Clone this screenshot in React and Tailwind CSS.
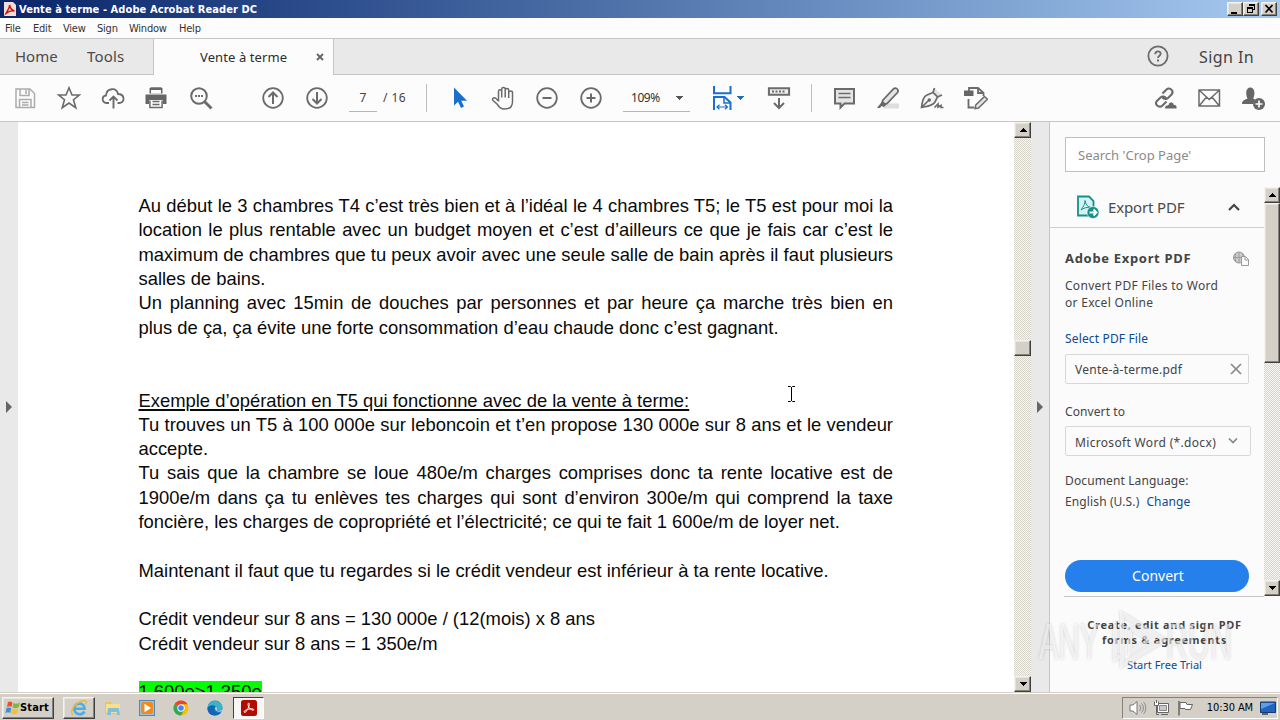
import clsx from 'clsx'

const bevel = 'bg-[#d4d0c8] border border-t-[#f4f2ee] border-l-[#f4f2ee] border-r-[#404040] border-b-[#404040] shadow-[inset_-1px_-1px_0_#85827c,inset_1px_1px_0_#e6e3dd]'
const track = 'bg-[repeating-conic-gradient(#f6f5f1_0_25%,#d8d5cb_0_50%)] bg-[length:2px_2px]'

const lines = [
  { text: 'Au début le 3 chambres T4 c’est très bien et à l’idéal le 4 chambres T5; le T5 est pour moi la', fill: true },
  { text: 'location le plus rentable avec un budget moyen et c’est d’ailleurs ce que je fais car c’est le', fill: true },
  { text: 'maximum de chambres que tu peux avoir avec une seule salle de bain après il faut plusieurs', fill: true },
  { text: 'salles de bains.' },
  { text: 'Un planning avec 15min de douches par personnes et par heure ça marche très bien en', fill: true },
  { text: 'plus de ça, ça évite une forte consommation d’eau chaude donc c’est gagnant.' },
  { text: '' },
  { text: '' },
  { text: 'Exemple d’opération en T5 qui fonctionne avec de la vente à terme:', underline: true },
  { text: 'Tu trouves un T5 à 100 000e sur leboncoin et t’en propose 130 000e sur 8 ans et le vendeur', fill: true },
  { text: 'accepte.' },
  { text: 'Tu sais que la chambre se loue 480e/m charges comprises donc ta rente locative est de', fill: true },
  { text: '1900e/m dans ça tu enlèves tes charges qui sont d’environ 300e/m qui comprend la taxe', fill: true },
  { text: 'foncière, les charges de copropriété et l’électricité; ce qui te fait 1 600e/m de loyer net.' },
  { text: '' },
  { text: 'Maintenant il faut que tu regardes si le crédit vendeur est inférieur à ta rente locative.' },
  { text: '' },
  { text: 'Crédit vendeur sur 8 ans = 130 000e / (12(mois) x 8 ans' },
  { text: 'Crédit vendeur sur 8 ans = 1 350e/m' },
  { text: '' },
  { text: '1 600e>1 350e', mark: true },
]

function Icon({ children, className, size = 24 }) {
  return (
    <svg viewBox="0 0 24 24" width={size} height={size} fill="none" stroke="#6b6b6b" strokeWidth="1.8" className={clsx('shrink-0', className)}>
      {children}
    </svg>
  )
}

function Caret({ className, up }) {
  return (
    <svg viewBox="0 0 8 4" width="8" height="4" className={clsx('shrink-0', className)} shapeRendering="crispEdges">
      <path d={up ? 'M0 4L4 0L8 4z' : 'M0 0H8L4 4z'} fill="currentColor" />
    </svg>
  )
}

function ScrollButton({ up }) {
  return <div className={clsx('h-4 w-full flex items-center justify-center text-black', bevel)}><Caret up={up} /></div>
}

function AcrobatIcon({ size }) {
  return (
    <svg viewBox="0 0 16 16" width={size} height={size} className="shrink-0">
      <rect width="16" height="16" rx="2.5" fill="#b30b00" />
      <path d="M3.2 12.2c-.8-.9 1.2-2.2 4-2.9 2.6-.7 5.5-.7 5.6.4.1 1-1.9.7-3.6-.9C7.600 7.200 6.700 4.900 7.100 3.700c.3-.9 1.500-.8 1.300.7-.2 2-2.300 6.100-3.600 7.500-.6.6-1.200.8-1.600.3z" fill="none" stroke="#fff" strokeWidth="1" />
    </svg>
  )
}

function TitleBar() {
  return (
    <div className="h-[18px] flex items-center bg-linear-to-r from-[#0a246a] to-[#a6caf0] pl-1 pr-[3px]">
      <svg viewBox="0 0 12 14" width="12" height="14" className="shrink-0">
        <path d="M0 0H9L12 3V14H0z" fill="#f4dcda" />
        <path d="M2 11.500c1-2.500 4-6 3.500-8.500 1 4 2.500 5.500 5 6-3-.5-6 .5-8.500 2.500z" fill="none" stroke="#c5160c" strokeWidth="1.500" />
      </svg>
      <span className="ml-[3px] mt-px text-[11px] leading-[18px] font-bold text-white tracking-[0.09px]">Vente à terme - Adobe Acrobat Reader DC</span>
      <div className="ml-auto flex">
        <div className={clsx('w-4 h-[14px]', bevel)}>
          <svg viewBox="0 0 14 12" width="14" height="12"><path d="M3 9H9V11H3z" fill="#000" /></svg>
        </div>
        <div className={clsx('w-4 h-[14px]', bevel)}>
          <svg viewBox="0 0 14 12" width="14" height="12" fill="none" stroke="#000" shapeRendering="crispEdges"><path d="M5.500 3V1.500H10.500V6.500H9M5 2H11M3.500 4.500H8.500V9.500H3.500zM3 5.500H9" /></svg>
        </div>
        <div className={clsx('w-4 h-[14px] ml-0.5', bevel)}>
          <svg viewBox="0 0 14 12" width="14" height="12"><path d="M3.500 2L10.500 9.500M10.500 2L3.500 9.500" stroke="#000" strokeWidth="1.700" /></svg>
        </div>
      </div>
    </div>
  )
}

function MenuBar() {
  return (
    <div className="h-5 flex items-center pl-[5px] pt-px bg-[#fdfcfc] text-[11px] leading-[19px] text-[#333] tracking-[-0.22px]">
      <span className="w-7">File</span>
      <span className="w-[30px]">Edit</span>
      <span className="w-[34px]">View</span>
      <span className="w-8">Sign</span>
      <span className="w-[50px]">Window</span>
      <span>Help</span>
    </div>
  )
}

function TabBar() {
  return (
    <div className="h-[37px] flex border-t border-[#c6c6c6] bg-[#e9e9e9] font-['Noto_Sans',sans-serif] text-[#4a4a4a]">
      <div className="w-[154px] flex items-center border-r border-b border-[#c6c6c6] pl-[15px] text-[15px]">
        <span className="w-[72px]">Home</span>
        <span className="tracking-[0.2px]">Tools</span>
      </div>
      <div className="w-[179px] flex items-center bg-[#fcfcfc] pl-[46px] text-[13px] text-[#2c2c2c]">
        <span className="w-[116px] tracking-[0.1px] mt-0.5">Vente à terme</span>
        <svg viewBox="0 0 8 8" width="8" height="8" className="mb-px"><path d="M1 1L7 7M7 1L1 7" stroke="#666" strokeWidth="1.900" /></svg>
      </div>
      <div className="flex-1 flex items-center justify-end border-l border-b border-[#c6c6c6] pr-[26px]">
        <Icon className="mr-[29px] -mt-0.5">
          <circle cx="12" cy="12" r="9.600" />
          <path d="M9.300 10.200C9.300 6.500 14.700 6.700 14.700 9.800C14.700 11.800 12 11.700 12 14" />
          <path d="M12 15.500V17.500" strokeWidth="2" />
        </Icon>
        <span className="text-[16px] tracking-[0.4px] text-[#444]">Sign In</span>
      </div>
    </div>
  )
}

function Toolbar() {
  return (
    <div className="h-[47px] flex items-center pl-[13px] pr-[15px] bg-[#fcfcfc] border-b border-[#c6c6c6] font-['Noto_Sans',sans-serif] text-xs text-[#444]">
      <div className="flex gap-5">
        <Icon className="opacity-55">
          <path d="M3 3H17L21.500 7.500V21.500H3zM7 3V9.500H16V3M13 4V8M6.500 21V13.500H18V21M9 16.500H15.500M9 19H15.500" strokeWidth="1.500" />
        </Icon>
        <Icon><path d="M12 1.800L15 9H22.500L16.500 13.700L18.800 21.700L12 17L5.200 21.700L7.500 13.700L1.500 9H9z" strokeWidth="1.600" /></Icon>
        <Icon>
          <path d="M8 17H5.500C.5 16.500 .5 10 5 9.500C5.500 1.800 15.500 1 17 8C23.700 8 24.500 16.500 18.500 17H16.500" />
          <path d="M12.500 22.500V11M8.500 14.500L12.500 10.500L16.500 14.500" strokeWidth="1.900" />
        </Icon>
        <Icon className="-ml-px mr-px">
          <path d="M5.500 2H18.500V7.500H5.500zM1.500 8.500H22.500V18H19V14H5V18H1.500z" fill="#666" stroke="none" />
          <path d="M6.500 1.900H17.500M5.900 14.500V21.600H18.100V14.500M8.500 15.500H15.500M8.500 18.500H15.500" strokeWidth="1.500" />
          <path d="M7 4H17V7.500H7z" fill="#fcfcfc" stroke="none" />
        </Icon>
        <Icon>
          <circle cx="10" cy="10" r="7.800" strokeWidth="2" />
          <path d="M15.700 15.700L22.500 22.500" strokeWidth="3" />
          <path d="M6 10H14" strokeWidth="1.800" strokeDasharray="2 1" />
        </Icon>
      </div>
      <div className="flex gap-5 ml-12">
        <Icon><circle cx="12" cy="12" r="9.800" /><path d="M12 18V7M7.500 11L12 6.500L16.500 11" strokeWidth="2" /></Icon>
        <Icon><circle cx="12" cy="12" r="9.800" /><path d="M12 6V17M7.500 13L12 17.500L16.500 13" strokeWidth="2" /></Icon>
      </div>
      <div className="ml-5 w-7 h-[27px] border-b border-[#b5b5b5] text-center leading-[26px]">7</div>
      <span className="ml-1.5 w-[37px] tracking-[0.4px]">/ 16</span>
      <div className="w-px h-7 ml-1.5 -mt-px bg-[#bdbdbd] mr-5" />
      <div className="flex gap-5">
        <Icon><path d="M7 1.500V19.500L11 15.800L14 22L17 20.500L14.300 14.800H20z" fill="#1b6dce" stroke="none" /></Icon>
        <Icon>
          <path d="M7.500 15.500V5.500C7.500 3.200 10.700 3.200 10.700 5.500V11.500V3.200C10.700 .9 14.200 .9 14.200 3.200V11.500V4C14.200 1.900 17.700 1.900 17.700 4V12V6.500C17.700 4.400 21.500 4.400 21.500 6.500V15.500C21.500 20.500 18.500 23 14 23C9.500 23 8 21 6 18L2 14.500C.5 12.500 3 11 5 12.500L7.500 15" strokeWidth="1.500" />
        </Icon>
        <Icon><circle cx="12" cy="12" r="9.800" /><path d="M7.500 12H16.500" strokeWidth="2" /></Icon>
        <Icon><circle cx="12" cy="12" r="9.800" /><path d="M7.500 12H16.500M12 7.500V16.500" strokeWidth="2" /></Icon>
      </div>
      <div className="ml-5 w-[67px] h-[27px] flex items-center border-b border-[#b5b5b5] pl-2 text-[#555]">
        <span className="w-11 tracking-[-0.45px] text-[#333]">109%</span>
        <Caret />
      </div>
      <Icon className="ml-[21px]">
        <path d="M3 0V7.200H19.500V0M3 24V11H13.500L19.500 16.500V24" stroke="#1b6dce" strokeWidth="2" />
        <path d="M13 11V17H19" stroke="#1b6dce" strokeWidth="1.500" />
        <path d="M6.500 21H16M8.500 18.800L6 21L8.500 23.200M14 18.800L16.500 21L14 23.200" stroke="#1b6dce" strokeWidth="1.200" />
      </Icon>
      <Caret className="ml-px mr-px text-[#1b6dce]" />
      <Icon className="ml-[22px]">
        <path d="M1.900 2.200H22.100V8.800H1.900z" fill="#eee" strokeWidth="2" />
        <path d="M5 5.500H19" strokeDasharray="2 1.500" />
        <path d="M12 12V21.500M7 17L12 22L17 17" strokeWidth="2" />
      </Icon>
      <div className="w-px h-7 ml-5 -mt-px mr-5 bg-[#bdbdbd]" />
      <div className="flex gap-5">
        <Icon>
          <path d="M3 3H22V17.500H12.500L8.500 21.500V17.500H3z" fill="#e4e4e4" strokeWidth="2" />
          <path d="M6.500 7.500H18.500M6.500 11.500H18.500" strokeWidth="1.400" />
        </Icon>
        <Icon>
          <path d="M10 17.500H23V22.500H7z" fill="#dedede" stroke="none" />
          <path d="M7 14L17.500 3C19.500 1 23.500 3.500 21.500 6.500L11 17.500C9 19 5.500 16.500 7 14z" fill="#e4e4e4" />
          <path d="M6 15L10 19L8 21L5.500 20L4 22H1L4.500 17.500z" fill="#666" stroke="none" />
        </Icon>
        <Icon>
          <path d="M14.500 2L13 6.500L17.500 11L22 9" fill="#e4e4e4" strokeWidth="1.700" />
          <path d="M1.500 21.500C2 17 3 11 6.500 9.300L13 6.500L17.500 11L15 16C12.500 20 6 20.500 1.500 21.500zM2 21L8.500 14.500" fill="#f4f4f4" strokeWidth="1.700" />
          <circle cx="9.300" cy="14" r="1.700" fill="#666" stroke="none" />
          <path d="M14.500 21.500L18 18L18 21L21 19.500V21.500H23.500" strokeWidth="1.700" />
        </Icon>
        <Icon>
          <path d="M5 5V2H14L19.500 7V10M14 2V7H19M4.500 13V21.500H10" />
          <path d="M0 4.500H9.500V10H0z" fill="#666" stroke="none" />
          <path d="M11 22.500L11.800 19L20.500 10.500L23.500 13.200L14.500 22z" fill="#e4e4e4" strokeWidth="1.500" />
        </Icon>
      </div>
      <div className="flex gap-5 ml-auto">
        <Icon>
          <path d="M9.500 7.500L13.500 3.500C16.500 .8 21.300 4.800 18.800 8.200L15 12C13.300 13.500 11 13.300 9.500 11.500M13.500 15.500L9.500 19.500C6.500 22.500 1 18.500 3.700 15.300L7.500 11.500C9.500 9.700 12 10.500 13 12" strokeWidth="2.100" />
          <path d="M11.500 23C11.500 19.500 13.500 19 15 19C16.500 14.500 20.500 15.500 21 18.500C23.500 18.500 24.500 20.500 24 23z" fill="#666" stroke="#fcfcfc" strokeWidth="1" />
        </Icon>
        <Icon><path d="M2 4H22.500V20H2zM2.500 4.500L12.200 13.500L22 4.500M2.500 19.500L9.500 11M22 19.500L15 11" strokeWidth="1.500" /></Icon>
        <Icon>
          <path d="M1 18C1 13.500 4.500 14 6.500 12.500C4.500 8.500 4.500 1.500 9.300 1.500S14.300 8.500 12.200 12.500L14 13.500L12 18z" fill="#666" stroke="none" />
          <circle cx="18" cy="18" r="6" fill="#666" stroke="none" />
          <path d="M14.500 18H21.500M18 14.500V21.500" stroke="#fcfcfc" strokeWidth="1.700" />
        </Icon>
      </div>
    </div>
  )
}

function Page() {
  return (
    <div className="flex-1 overflow-hidden bg-white pl-[120.5px] pt-[72px] font-['Liberation_Sans',Arial,sans-serif] text-[18.4px] leading-[24.32px] text-[#0a0a0a]">
      <div className="w-[754.5px]">
        {lines.map((l, i) => (
          <p key={i} className={clsx('h-[24.32px] whitespace-nowrap', l.fill && 'text-justify [text-align-last:justify] !whitespace-normal')}>
            <span className={clsx(l.underline && 'underline decoration-[1.5px] underline-offset-[2px]', l.mark && 'bg-[#00ff00]')}>{l.text}</span>
          </p>
        ))}
      </div>
    </div>
  )
}

function SideHandle({ className }) {
  return (
    <div className={clsx('flex items-center justify-center bg-[#e9e9e9] shrink-0', className)}>
      <svg viewBox="0 0 6 12" width="6" height="12"><path d="M0 0L6 6L0 12z" fill="#666" /></svg>
    </div>
  )
}

function ExportPanel() {
  return (
    <div className="relative w-[231px] shrink-0 flex flex-col border-l border-[#c6c6c6] bg-[#fbfbfb] font-['Noto_Sans',sans-serif] text-xs text-[#444]">
      <div className="ml-[15px] mt-[15px] w-[200px] h-[35px] border border-[#bfbfbf] bg-white pl-3 text-[13px] leading-[34px] text-[#8a8a8a]">Search 'Crop Page'</div>
      <div className="mt-[15px] h-[409px] flex">
        <div className="w-[214px] flex flex-col">
          <div className="h-[41px] shrink-0 flex items-center border-b border-[#cfcfcf] pl-[26px] pr-6">
            <svg viewBox="0 0 24 24" width="24" height="24" fill="none" className="shrink-0">
              <path d="M2 1.500H13L17.500 6V20.500H2z" fill="#d5f1f2" stroke="#12908c" strokeWidth="1.800" />
              <path d="M5 15C7 12 9.500 8.500 9 5.500C9.500 9 11.500 12 14.500 12.300C11 12 7.500 13 5 15z" stroke="#12908c" />
              <circle cx="17" cy="17.500" r="6" fill="#12908c" stroke="#fbfbfb" strokeWidth=".6" />
              <path d="M13.500 17.500H20M17.500 14.500L20.500 17.500L17.500 20.500" stroke="#fff" strokeWidth="1.900" />
            </svg>
            <span className="ml-2 text-[15px] tracking-[-0.15px] text-[#4a4a4a]">Export PDF</span>
            <svg viewBox="0 0 12 8" width="12" height="8" className="ml-auto"><path d="M1 7L6 2L11 7" fill="none" stroke="#444" strokeWidth="2.200" /></svg>
          </div>
          <div className="flex-1 flex flex-col pl-[15px] pr-[14px] pt-[21px]">
            <div className="flex items-center justify-between h-5">
              <span className="text-[13px] font-bold tracking-[0.68px]">Adobe Export PDF</span>
              <svg viewBox="0 0 18 16" width="18" height="16" fill="none" stroke="#9a9a9a">
                <circle cx="7" cy="6.500" r="5.500" fill="#ccc" />
                <path d="M1.500 6.500H12M7 1V12M4 2.500C2.800 5 2.800 8 4 11M10 2.500C11 4 11 5 11 6" />
                <path d="M9.500 5.500H13.500L16.500 8.500V14.500H9.500z" fill="#fbfbfb" />
                <path d="M13 5.500V9H16.500" />
              </svg>
            </div>
            <p className="mt-2 leading-[17px] tracking-[0.29px]">Convert PDF Files to Word<br />or Excel Online</p>
            <span className="mt-[19px] leading-[18px] tracking-[0.15px] text-[#0d4a8f]">Select PDF File</span>
            <div className="mt-1.5 w-[184px] h-[30px] shrink-0 flex items-center justify-between border border-[#d8d8d8] rounded-xs pl-[9px] pr-1.5">
              <span className="mt-0.5 tracking-[0.25px]">Vente-à-terme.pdf</span>
              <svg viewBox="0 0 12 12" width="12" height="12"><path d="M1 1L11 11M11 1L1 11" stroke="#888" strokeWidth="1.700" /></svg>
            </div>
            <span className="mt-[19px] leading-[18px] tracking-[0.1px]">Convert to</span>
            <div className="mt-[5px] w-[186px] h-[30px] shrink-0 flex items-center justify-between border border-[#d8d8d8] rounded-xs pl-[9px] pr-3">
              <span className="mt-[3px] tracking-[0.33px] whitespace-nowrap">Microsoft Word (*.docx)</span>
              <svg viewBox="0 0 10 6" width="10" height="6"><path d="M1 .5L5 4.500L9 .5" fill="none" stroke="#888" strokeWidth="1.700" /></svg>
            </div>
            <p className="mt-[14px] leading-[21px] tracking-[0.12px]">Document Language:<br />English (U.S.)<span className="ml-[7px] text-[#0d4a8f]">Change</span></p>
            <button className="mt-[48px] w-[184px] h-8 shrink-0 rounded-full bg-[#2680eb] text-white text-[14px] leading-[30px] pl-0.5">Convert</button>
          </div>
        </div>
        <div className={clsx('w-4 flex flex-col', track)}>
          <ScrollButton up />
          <div className={clsx('h-[160px]', bevel)} />
          <div className="flex-1" />
          <ScrollButton />
        </div>
      </div>
      <div className="ml-[14px] w-[200px] h-px bg-[#c6c6c6]" />
      <div className="pt-5 w-[229px] text-center">
        <p className="text-[11px] leading-[15px] font-bold tracking-[0.7px]">Create, edit and sign PDF<br />forms &amp; agreements</p>
        <p className="mt-[9px] text-[11px] leading-[18px] text-[#0d4a8f]">Start Free Trial</p>
      </div>
      <svg viewBox="0 0 200 66" width="200" height="66" className="absolute left-[-14px] top-[484px] font-['Liberation_Sans',sans-serif] drop-shadow-[0_0_1.500px_rgba(0,0,0,0.3)]">
        <g fill="#fff" fillOpacity=".55" fontSize="50">
          <text x="3" y="53" textLength="60" lengthAdjust="spacingAndGlyphs">ANY</text>
          <text x="130" y="53" textLength="66" lengthAdjust="spacingAndGlyphs">RUN</text>
        </g>
        <path d="M86 8L128 34L86 59zM79 16V53L84 50M94 22L113 34L94 46z" fill="none" stroke="#fff" strokeOpacity=".6" strokeWidth="4" />
      </svg>
    </div>
  )
}

function Taskbar() {
  return (
    <div className="h-7 flex items-center bg-[#d4d0c8] border-t border-[#d4d0c8] shadow-[inset_0_1px_0_#fff] pl-0.5 pr-0.5 pt-0.5 text-[11px] text-black">
      <div className={clsx('w-[52px] h-[22px] flex items-center pl-0.5', bevel)}>
        <svg viewBox="0 0 16 16" width="16" height="16" className="shrink-0">
          <path d="M3 2C5 1 6 1.500 7.500 2.500L6.500 7C5 6 4 6 2 7z" fill="#e8502a" />
          <path d="M8.500 3C10 4 12 4 15 2.500L13.500 7.500C11.500 8.500 9.500 8.500 7.500 7.500z" fill="#7fb83c" />
          <path d="M1.500 8C3.500 7 5 7.300 6.300 8.200L5.200 13C4 12 2.500 12 .5 13z" fill="#3c8fd6" />
          <path d="M7.300 8.700C9 9.700 11 9.600 13.200 8.700L12 13.500C10 14.500 8 14.500 6 13.500z" fill="#f5c02c" />
        </svg>
        <span className="mt-px -ml-px font-bold tracking-[0.15px]">Start</span>
      </div>
      <div className={clsx('ml-[9px] w-8 h-[22px] flex items-center justify-center', bevel)}>
        <svg viewBox="0 0 18 18" width="18" height="18" fill="none">
          <path d="M14.500 12.500C12 17 4.500 16 4.300 9.500C4.500 3 14.500 3 14.600 9.800H5" stroke="#4aaee8" strokeWidth="2.600" />
          <path d="M3 16C-1 14 4 4 13 1.800C17 1 16.500 3.500 15.500 5" stroke="#e9b93a" strokeWidth="1.400" />
        </svg>
      </div>
      <svg viewBox="0 0 18 16" width="18" height="16" className="ml-[9px]">
        <path d="M1 2H7L8 4H15V14H1z" fill="#e8c55a" />
        <path d="M2 4H16V13H2z" fill="#f8e08c" />
        <path d="M4 8H15L16 15H13V12H7V15H3z" fill="#7fc0dd" />
      </svg>
      <svg viewBox="0 0 16 16" width="16" height="16" className="ml-[17px]">
        <rect x=".5" y=".5" width="15" height="15" fill="#9cc3e2" stroke="#4d88b8" />
        <rect x="2" y="2" width="12" height="12" rx="2" fill="#f08a1c" />
        <path d="M5.500 3.800L12 8L5.500 12.200z" fill="#fff" />
      </svg>
      <svg viewBox="0 0 16 16" width="16" height="16" className="ml-[18px]">
        <circle cx="8" cy="8" r="7.500" fill="#fbbc04" />
        <path d="M8 8L1.500 4.250A7.500 7.500 0 0 1 14.500 4.250H8z" fill="#ea4335" />
        <path d="M8 8L1.500 4.250A7.500 7.500 0 0 0 8 15.500L11.200 10z" fill="#34a853" />
        <circle cx="8" cy="8" r="3.700" fill="#fff" />
        <circle cx="8" cy="8" r="2.800" fill="#4285f4" />
      </svg>
      <svg viewBox="0 0 16 16" width="16" height="16" className="ml-[18px]">
        <circle cx="8" cy="8" r="7.500" fill="#1479c9" />
        <path d="M.5 8C1 -1.500 14.500 -1 15.500 7C15.500 10.500 12 11 9.500 10.500C11 9 10 6 7 6C4 6 1 7 .5 8z" fill="#35b6c9" />
        <path d="M.5 8C2 4.500 8 4.500 8.500 7C6 8 6.500 12 11 13C13 13.200 14 12.500 14.300 12.500C10 17.500 0 16.500 .5 8z" fill="#1565b5" />
        <path d="M9.500 10.500C10.700 9.200 10.300 7.300 8.700 6.700C7 8.500 8.500 12.500 14.500 11.500L15.200 9.500C13.500 11 11 11 9.500 10.500z" fill="#d4d0c8" />
      </svg>
      <div className="ml-2.5 w-[31px] h-[22px] flex items-center justify-center bg-[#f8f7f5] border border-t-[#404040] border-l-[#404040] border-r-white border-b-white">
        <AcrobatIcon size={16} />
      </div>
      <div className="ml-auto w-[156px] h-[22px] flex items-center border border-t-[#85827c] border-l-[#85827c] border-r-white border-b-white pl-1.5 pr-px">
        <svg viewBox="0 0 18 16" width="18" height="16" fill="none" stroke="#777">
          <path d="M1 5H4L8 1.500V14.500L4 11H1z" fill="#fff" />
          <path d="M10.500 5C12 7 12 9 10.500 11M12.500 3.500C15 6 15 10 12.500 12.500M14.500 2C17.500 5 17.500 11 14.500 14" strokeWidth=".8" />
        </svg>
        <svg viewBox="0 0 17 16" width="17" height="16" fill="none" stroke="#666" className="ml-1.5">
          <path d="M4.500 3.500H15.500V12.500H4.500z" fill="#fff" />
          <path d="M6.500 5.500H13.500V10.500H6.500z" fill="#c9c9c9" stroke="#888" />
          <path d="M8 14.500H15M3.500 5V14.500H6" />
          <path d="M1.500 1.500V5.500H5.500V1.500M3.500 0V3" fill="#fff" />
        </svg>
        <svg viewBox="0 0 17 16" width="17" height="16" stroke="#666" className="ml-[7px]">
          <path d="M2 1V15.500" strokeWidth="1.500" />
          <path d="M3 2.500H9L10 4.500H15.500L13.500 9.500H8.500L8 8.500H3z" fill="#fff" />
        </svg>
        <span className="ml-auto mr-[7px] mt-px tracking-[-0.1px]">10:30 AM</span>
        <svg viewBox="0 0 16 16" width="16" height="16">
          <path d="M.5 2H15.500V12.500H.5z" fill="#2164c0" stroke="#18396d" />
          <path d="M1 3H15L1 9z" fill="#5da0e6" />
          <path d="M2 14H8" stroke="#345" strokeWidth="1.500" />
        </svg>
      </div>
    </div>
  )
}

export default function App() {
  return (
    <div className="w-[1280px] h-[720px] flex flex-col overflow-hidden font-['DejaVu_Sans_Condensed','DejaVu_Sans',sans-serif]">
      <TitleBar />
      <MenuBar />
      <TabBar />
      <Toolbar />
      <div className="relative h-[570px] flex">
        <SideHandle className="w-[18px]" />
        <Page />
        <div className={clsx('w-[17px] shrink-0 flex flex-col', track)}>
          <ScrollButton up />
          <div className="h-[202px]" />
          <div className={clsx('h-4', bevel)} />
          <div className="flex-1" />
          <ScrollButton />
        </div>
        <SideHandle className="w-[18px]" />
        <ExportPanel />
        <svg viewBox="0 0 9 16" width="9" height="16" className="absolute left-[787px] top-[264px]">
          <path d="M1 .5H3.500L4.500 1.500L5.500 .5H8M4.500 1V15M1 15.500H3.500L4.500 14.500L5.500 15.500H8" fill="none" stroke="#000" />
        </svg>
      </div>
      <Taskbar />
    </div>
  )
}
